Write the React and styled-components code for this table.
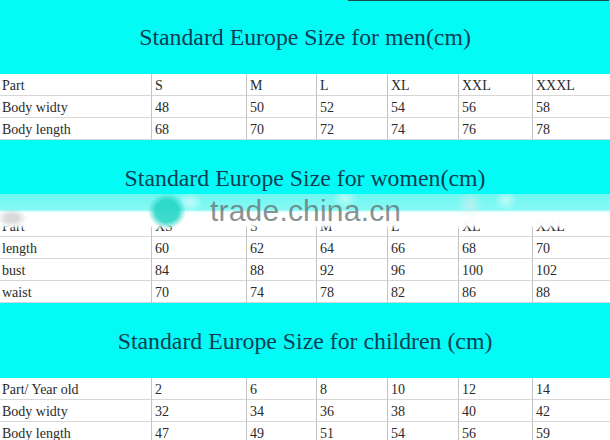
import React from "react";
import styled, { createGlobalStyle } from "styled-components";

const Global = createGlobalStyle`
  html, body { margin: 0; padding: 0; background: #ffffff; }
  body { width: 610px; height: 440px; overflow: hidden; }
`;

const CYAN = "#02fcf5";

const Page = styled.div`
  width: 610px;
  display: flex;
  flex-direction: column;
  font-family: "Liberation Serif", "Times New Roman", serif;
`;

const Section = styled.section`
  position: relative;
  display: flex;
  flex-direction: column;
`;

const Header = styled.header`
  height: ${(p) => p.$h}px;
  display: flex;
  align-items: center;
  justify-content: center;
  background: ${(p) =>
    p.$rule
      ? `linear-gradient(#1d4a4a, #1d4a4a) 348px 0 / 261px 1px no-repeat, ${CYAN}`
      : CYAN};
`;

const Title = styled.h2`
  margin: 0;
  padding-top: ${(p) => p.$dy || 0}px;
  font-family: "Liberation Serif", "Times New Roman", serif;
  font-weight: normal;
  font-size: 23.8px;
  color: #0b3e55;
`;

const Table = styled.div`
  display: grid;
  grid-template-columns: 151px 95px 70px 71px 71px 74px 1fr;
  background: #ffffff;
`;

const Cell = styled.div`
  box-sizing: content-box;
  height: 19px;
  padding-top: 2px;
  padding-left: ${(p) => (p.$first ? 2 : 3)}px;
  border-bottom: 1px solid #d6d6d6;
  border-left: ${(p) => (p.$first ? "none" : "1px solid #c4c4c4")};
  display: flex;
  align-items: center;
  font-size: 14px;
  color: #2a2a2a;
  white-space: nowrap;
  overflow: hidden;
`;

const Watermark = styled.div`
  position: absolute;
  left: 0;
  top: 54px;
  width: 610px;
  height: 35px;
  display: flex;
  align-items: flex-start;
  padding-left: 210px;
  box-sizing: border-box;
  pointer-events: none;
  background:
    radial-gradient(ellipse 19px 18px at 167px 17px, rgba(38, 214, 198, 0.9) 60%, rgba(38, 214, 198, 0) 100%),
    radial-gradient(ellipse 15px 9px at 12px 24px, rgba(150, 150, 150, 0.35) 40%, rgba(150, 150, 150, 0) 100%),
    radial-gradient(ellipse 13px 10px at 190px 8px, rgba(255, 255, 255, 0.55), rgba(255, 255, 255, 0) 100%),
    radial-gradient(ellipse 13px 11px at 345px 4px, rgba(255, 255, 255, 0.5), rgba(255, 255, 255, 0) 100%),
    radial-gradient(ellipse 13px 15px at 470px 10px, rgba(225, 238, 238, 0.6), rgba(225, 238, 238, 0) 100%),
    radial-gradient(ellipse 12px 11px at 506px 6px, rgba(255, 255, 255, 0.5), rgba(255, 255, 255, 0) 100%),
    linear-gradient(
      to bottom,
      rgba(120, 246, 240, 0.92) 0px,
      rgba(150, 248, 244, 0.9) 16px,
      rgba(255, 255, 255, 0.98) 18px,
      rgba(255, 255, 255, 0.96) 31px,
      rgba(255, 255, 255, 0) 35px
    );
`;

const Mark = styled.span`
  font-family: "Liberation Sans", Arial, sans-serif;
  font-size: 30px;
  line-height: 34px;
  color: rgba(95, 105, 105, 0.72);
  letter-spacing: 0.2px;
`;

const sections = [
  {
    title: "Standard Europe Size for men(cm)",
    h: 74,
    rule: true,
    rows: [
      ["Part", "S", "M", "L", "XL", "XXL", "XXXL"],
      ["Body widty", "48", "50", "52", "54", "56", "58"],
      ["Body length", "68", "70", "72", "74", "76", "78"],
    ],
  },
  {
    title: "Standard Europe Size for women(cm)",
    h: 75,
    dy: 2,
    watermark: true,
    rows: [
      ["Part", "XS", "S", "M", "L", "XL", "XXL"],
      ["length", "60", "62", "64", "66", "68", "70"],
      ["bust", "84", "88", "92", "96", "100", "102"],
      ["waist", "70", "74", "78", "82", "86", "88"],
    ],
  },
  {
    title: "Standard Europe Size for children (cm)",
    h: 75,
    dy: 2,
    rows: [
      ["Part/ Year old", "2", "6", "8", "10", "12", "14"],
      ["Body widty", "32", "34", "36", "38", "40", "42"],
      ["Body length", "47", "49", "51", "54", "56", "59"],
    ],
  },
];

export default function App() {
  return (
    <>
      <Global />
      <Page>
        {sections.map((s) => (
          <Section key={s.title}>
            <Header $h={s.h} $rule={s.rule}>
              <Title $dy={s.dy}>{s.title}</Title>
            </Header>
            <Table>
              {s.rows.map((r, ri) =>
                r.map((c, ci) => (
                  <Cell key={ri + "-" + ci} $first={ci === 0}>
                    {c}
                  </Cell>
                ))
              )}
            </Table>
            {s.watermark && (
              <Watermark>
                <Mark>trade.china.cn</Mark>
              </Watermark>
            )}
          </Section>
        ))}
      </Page>
    </>
  );
}
